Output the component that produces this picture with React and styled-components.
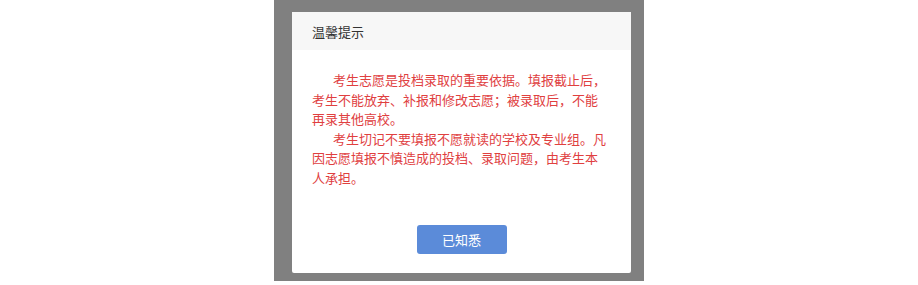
import styled, { createGlobalStyle } from "styled-components";

const GlobalStyle = createGlobalStyle`
  html, body {
    margin: 0;
    padding: 0;
    background: #ffffff;
    font-family: "Noto Sans CJK SC", "Noto Sans", sans-serif;
  }
`;

const Page = styled.div`
  display: flex;
  justify-content: center;
  width: 918px;
  height: 285px;
`;

const Overlay = styled.div`
  box-sizing: border-box;
  width: 370px;
  height: 281px;
  background: #808080;
  padding: 12px 13px 0 18px;
`;

const Dialog = styled.div`
  display: flex;
  flex-direction: column;
  width: 339px;
  height: 261px;
  background: #ffffff;
  border-radius: 2px;
`;

const Header = styled.div`
  display: flex;
  align-items: center;
  height: 38px;
  padding: 0 20px;
  background: #f7f7f7;
  color: #333333;
  font-size: 13px;
`;

const Body = styled.div`
  padding: 20px 23px 0 20px;
  color: #e0403f;
  font-size: 13px;
  line-height: 19.5px;
`;

const Paragraph = styled.p`
  margin: 0;
  text-indent: 21px;
`;

const Footer = styled.div`
  display: flex;
  justify-content: center;
  margin-top: auto;
  padding-bottom: 19px;
`;

const Button = styled.button`
  width: 90px;
  height: 29px;
  border: none;
  border-radius: 3px;
  background: #5b8bd9;
  color: #ffffff;
  font-family: inherit;
  font-size: 13px;
  cursor: pointer;
`;

const App = () => {
  return (
    <Page>
      <GlobalStyle />
      <Overlay>
        <Dialog>
          <Header>温馨提示</Header>
          <Body>
            <Paragraph>
              考生志愿是投档录取的重要依据。填报截止后，考生不能放弃、补报和修改志愿；被录取后，不能再录其他高校。
            </Paragraph>
            <Paragraph>
              考生切记不要填报不愿就读的学校及专业组。凡因志愿填报不慎造成的投档、录取问题，由考生本人承担。
            </Paragraph>
          </Body>
          <Footer>
            <Button>已知悉</Button>
          </Footer>
        </Dialog>
      </Overlay>
    </Page>
  );
};

export default App;
